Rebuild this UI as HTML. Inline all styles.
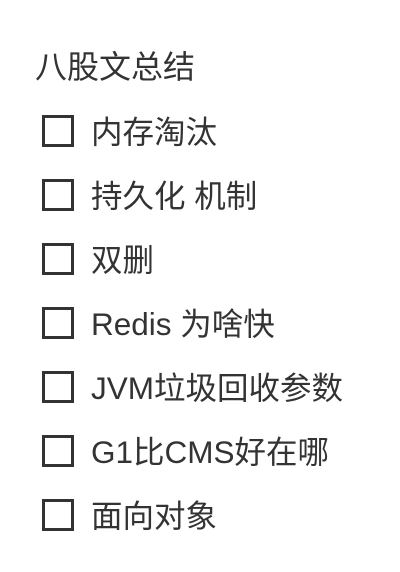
<!DOCTYPE html>
<html><head><meta charset="utf-8"><style>
body{margin:0;width:400px;height:572px;background:#fff;font-family:"Liberation Sans","Noto Sans CJK SC",sans-serif;color:#333;}
.t{position:absolute;left:35px;top:47px;font-size:32px;line-height:40px;}
.r{position:absolute;left:42px;height:40px;display:flex;align-items:center;font-size:31.5px;}
.b{width:26px;height:26px;border:3px solid #333;box-sizing:content-box;margin-right:17px;margin-top:2px;}
</style></head><body>
<div class="t">八股文总结</div>
<div class="r" style="top:110px"><div class="b"></div>内存淘汰</div>
<div class="r" style="top:174px"><div class="b"></div>持久化 机制</div>
<div class="r" style="top:238px"><div class="b"></div>双删</div>
<div class="r" style="top:302px"><div class="b"></div>Redis 为啥快</div>
<div class="r" style="top:366px"><div class="b"></div>JVM垃圾回收参数</div>
<div class="r" style="top:430px"><div class="b"></div>G1比CMS好在哪</div>
<div class="r" style="top:494px"><div class="b"></div>面向对象</div>
</body></html>
